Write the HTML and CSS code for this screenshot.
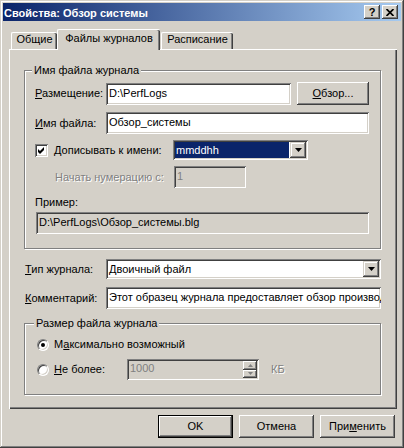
FILE: index.html
```html
<!DOCTYPE html>
<html lang="ru">
<head>
    <meta charset="UTF-8">
    <title>Свойства: Обзор системы</title>
    <link rel="stylesheet" href="styles.css">
</head>
<body>
<div class="window">
    <!-- Заголовок окна -->
    <div class="titlebar">
        <span class="title">Свойства: Обзор системы</span>
        <span class="tb-btn help">?</span>
        <span class="tb-btn close">
            <svg width="8" height="7" viewBox="0 0 8 7"><path d="M0.5 0 L7.5 7 M7.5 0 L0.5 7" stroke="#000" stroke-width="1.7"/></svg>
        </span>
    </div>

    <!-- Вкладки -->
    <div class="tabs">
        <div class="tab">Общие</div>
        <div class="tab active">Файлы журналов</div>
        <div class="tab">Расписание</div>
    </div>

    <div class="panel">
        <div class="group group-file">
            <div class="legend">Имя файла журнала</div>

            <div class="row row-place">
                <span class="label w71"><u>Р</u>азмещение:</span>
                <div class="edit place">D:\PerfLogs</div>
                <div class="button browse"><u>О</u>бзор...</div>
            </div>

            <div class="row row-name">
                <span class="label w71"><u>И</u>мя файла:</span>
                <div class="edit grow">Обзор_системы</div>
            </div>

            <div class="row row-suffix">
                <span class="check">
                    <svg width="7" height="7" viewBox="0 0 7 7"><polygon points="0,2 2,4 6,0 6,3 2,7 0,5" fill="#000"/></svg>
                </span>
                <span class="label w119"><u>Д</u>описывать к имени:</span>
                <div class="combo suffix">
                    <span class="combo-text selected">mmddhh</span>
                    <span class="drop"><svg width="7" height="4" viewBox="0 0 7 4"><polygon points="0,0 7,0 3.5,4" fill="#000"/></svg></span>
                </div>
            </div>

            <div class="row row-start">
                <span class="label w119 disabled">Начать нумерацию с:</span>
                <div class="edit off start">1</div>
            </div>

            <div class="caption">Пример:</div>
            <div class="edit off example">D:\PerfLogs\Обзор_системы.blg</div>
        </div>

        <div class="row row-type">
            <span class="label w81"><u>Т</u>ип журнала:</span>
            <div class="combo grow">
                <span class="combo-text">Двоичный файл</span>
                <span class="drop"><svg width="7" height="4" viewBox="0 0 7 4"><polygon points="0,0 7,0 3.5,4" fill="#000"/></svg></span>
            </div>
        </div>

        <div class="row row-comment">
            <span class="label w81"><u>К</u>омментарий:</span>
            <div class="edit grow">Этот образец журнала предоставляет обзор производительности системы</div>
        </div>

        <div class="group group-size">
            <div class="legend">Размер файла журнала</div>

            <div class="row row-max">
                <span class="radio on"></span>
                <span class="label">М<u>а</u>ксимально возможный</span>
            </div>

            <div class="row row-limit">
                <span class="radio"></span>
                <span class="label w73"><u>Н</u>е более:</span>
                <div class="edit off spin">
                    <span class="spin-text">1000</span>
                    <span class="spin-btns">
                        <span class="spin-btn"><svg width="5" height="3" viewBox="0 0 5 3"><polygon points="2.5,0 5,3 0,3" fill="#808080"/></svg></span>
                        <span class="spin-btn"><svg width="5" height="3" viewBox="0 0 5 3"><polygon points="0,0 5,0 2.5,3" fill="#808080"/></svg></span>
                    </span>
                </div>
                <span class="label disabled unit">КБ</span>
            </div>
        </div>
    </div>

    <!-- Кнопки диалога -->
    <div class="footer">
        <div class="button default">OK</div>
        <div class="button">Отмена</div>
        <div class="button">При<u>м</u>енить</div>
    </div>
</div>
</body>
</html>
```

FILE: styles.css
```css
body {
    margin: 0;
    font-family: "Liberation Sans", Arial, sans-serif;
    font-size: 11px;
    color: #000;
    background-color: #d4d0c8;
}

u {
    text-underline-offset: 1px;
}

.window {
    width: 404px;
    height: 448px;
    box-sizing: border-box;
    padding: 3px;
    background-color: #d4d0c8;
    box-shadow: inset -1px -1px 0 #404040, inset 1px 1px 0 #d4d0c8,
                inset -2px -2px 0 #808080, inset 2px 2px 0 #fff;
    display: flex;
    flex-direction: column;
}

/* Заголовок */
.titlebar {
    height: 18px;
    flex: none;
    display: flex;
    align-items: center;
    gap: 2px;
    padding: 0 3px 0 1px;
    background: linear-gradient(to right, #0a246a, #a6caf0);
}

.title {
    flex: 1;
    color: #fff;
    font-weight: bold;
    line-height: 14px;
    margin-top: 2px;
    white-space: nowrap;
}

.tb-btn {
    width: 16px;
    height: 14px;
    box-sizing: border-box;
    background-color: #d4d0c8;
    box-shadow: inset -1px -1px 0 #404040, inset 1px 1px 0 #fff,
                inset -2px -2px 0 #808080;
    display: flex;
    align-items: center;
    justify-content: center;
    font-weight: bold;
    font-size: 11px;
}

.tb-btn svg {
    display: block;
}

/* Вкладки */
.tabs {
    display: flex;
    align-items: flex-end;
    height: 20px;
    flex: none;
    margin: 8px 0 0 8px;
}

.tab {
    height: 17px;
    box-sizing: border-box;
    border-top: 1px solid #fff;
    border-left: 1px solid #fff;
    border-radius: 2px 2px 0 0;
    box-shadow: inset -1px 0 0 #404040, inset -2px 0 0 #808080;
    line-height: 13px;
    text-align: center;
    width: 46px;
}

.tab.active {
    width: 103px;
    height: 21px;
    margin-bottom: -1px;
    margin-right: 1px;
    padding-top: 2px;
    background-color: #d4d0c8;
    position: relative;
    z-index: 1;
}

.tab:last-child {
    width: 72px;
}

/* Панель вкладки */
.panel {
    height: 360px;
    flex: none;
    box-sizing: border-box;
    margin: 0 4px 0 6px;
    padding: 20px 16px 0 14px;
    border-top: 1px solid #fff;
    border-left: 1px solid #fff;
    box-shadow: inset -1px -1px 0 #404040, inset -2px -2px 0 #808080;
}

.group {
    border: 1px solid #808080;
    box-shadow: inset 1px 1px 0 #fff, 1px 1px 0 #fff;
    padding: 0 11px 14px 10px;
}

.legend {
    width: fit-content;
    margin: -7px 0 0 -3px;
    padding: 0 2px;
    line-height: 13px;
    background-color: #d4d0c8;
}

.row {
    display: flex;
    align-items: center;
}

.label {
    flex: none;
    white-space: nowrap;
    line-height: 13px;
}

.w71 { width: 71px; }
.w73 { width: 73px; }
.w81 { width: 81px; }
.w119 { width: 119px; }

.disabled {
    color: #808080;
    text-shadow: 1px 1px 0 #fff;
}

/* Поля ввода */
.edit {
    height: 22px;
    box-sizing: border-box;
    padding: 0 3px;
    line-height: 21px;
    background-color: #fff;
    box-shadow: inset 1px 1px 0 #808080, inset -1px -1px 0 #fff,
                inset 2px 2px 0 #404040, inset -2px -2px 0 #d4d0c8;
    white-space: nowrap;
    overflow: hidden;
}

.edit.off {
    background-color: #d4d0c8;
}

.grow {
    flex: 1;
    min-width: 0;
}

.combo {
    height: 20px;
    box-sizing: border-box;
    padding: 2px;
    background-color: #fff;
    box-shadow: inset 1px 1px 0 #808080, inset -1px -1px 0 #fff,
                inset 2px 2px 0 #404040, inset -2px -2px 0 #d4d0c8;
    display: flex;
}

.combo-text {
    flex: 1;
    padding-left: 1px;
    line-height: 16px;
    white-space: nowrap;
    overflow: hidden;
}

.combo-text.selected {
    background-color: #0a246a;
    color: #fff;
    margin-right: 1px;
}

.drop {
    width: 16px;
    flex: none;
    background-color: #d4d0c8;
    box-shadow: inset -1px -1px 0 #404040, inset 1px 1px 0 #d4d0c8,
                inset -2px -2px 0 #808080, inset 2px 2px 0 #fff;
    display: flex;
    align-items: center;
    justify-content: center;
}

.drop svg {
    display: block;
}

/* Кнопки */
.button {
    height: 23px;
    width: 75px;
    box-sizing: border-box;
    background-color: #d4d0c8;
    box-shadow: inset -1px -1px 0 #404040, inset 1px 1px 0 #fff,
                inset -2px -2px 0 #808080, inset 2px 2px 0 #d4d0c8;
    display: flex;
    align-items: center;
    justify-content: center;
    line-height: 13px;
}

.button.default {
    border: 1px solid #000;
}

/* Группа «Имя файла журнала» */
.row-place {
    margin-top: 5px;
}

.place {
    width: 185px;
}

.browse {
    width: 72px;
    margin-left: 6px;
}

.row-name {
    margin-top: 7px;
}

.row-suffix {
    margin-top: 6px;
}

.check {
    width: 13px;
    height: 13px;
    box-sizing: border-box;
    margin-right: 6px;
    background-color: #fff;
    box-shadow: inset 1px 1px 0 #808080, inset -1px -1px 0 #fff,
                inset 2px 2px 0 #404040, inset -2px -2px 0 #d4d0c8;
    display: flex;
    align-items: center;
    justify-content: center;
}

.check svg {
    display: block;
}

.suffix {
    width: 135px;
}

.row-start {
    margin-top: 6px;
    padding-left: 20px;
}

.start {
    width: 72px;
    color: #808080;
}

.caption {
    margin-top: 8px;
    line-height: 13px;
}

.example {
    margin: 3px 0 0 1px;
}

/* Тип и комментарий */
.row-type {
    margin-top: 10px;
    padding-left: 1px;
}

.row-comment {
    margin-top: 8px;
    padding-left: 1px;
}

/* Группа «Размер файла журнала» */
.group-size {
    margin-top: 14px;
    padding-left: 12px;
}

.row-max {
    margin-top: 8px;
}

.row-limit {
    margin-top: 8px;
}

.radio {
    width: 12px;
    height: 12px;
    flex: none;
    box-sizing: border-box;
    margin-right: 5px;
    border-radius: 50%;
    border: 1px solid;
    border-color: #808080 #fff #fff #808080;
    background-color: #fff;
    box-shadow: inset 1px 1px 0 #404040, inset -1px -1px 0 #d4d0c8;
    display: flex;
    align-items: center;
    justify-content: center;
}

.radio.on::after {
    content: "";
    width: 4px;
    height: 4px;
    border-radius: 50%;
    background-color: #000;
}

.spin {
    width: 132px;
    height: 21px;
    padding: 2px 2px 2px 3px;
    display: flex;
    color: #808080;
}

.spin-text {
    flex: 1;
    line-height: 15px;
}

.spin-btns {
    width: 14px;
    display: flex;
    flex-direction: column;
}

.spin-btn {
    flex: 1;
    background-color: #d4d0c8;
    box-shadow: inset -1px -1px 0 #404040, inset 1px 1px 0 #fff,
                inset -2px -2px 0 #808080;
    display: flex;
    align-items: center;
    justify-content: center;
}

.spin-btn svg {
    display: block;
}

.unit {
    margin-left: 12px;
}

/* Нижние кнопки */
.footer {
    display: flex;
    justify-content: flex-end;
    gap: 6px;
    margin-top: 6px;
    padding-right: 6px;
}
```
